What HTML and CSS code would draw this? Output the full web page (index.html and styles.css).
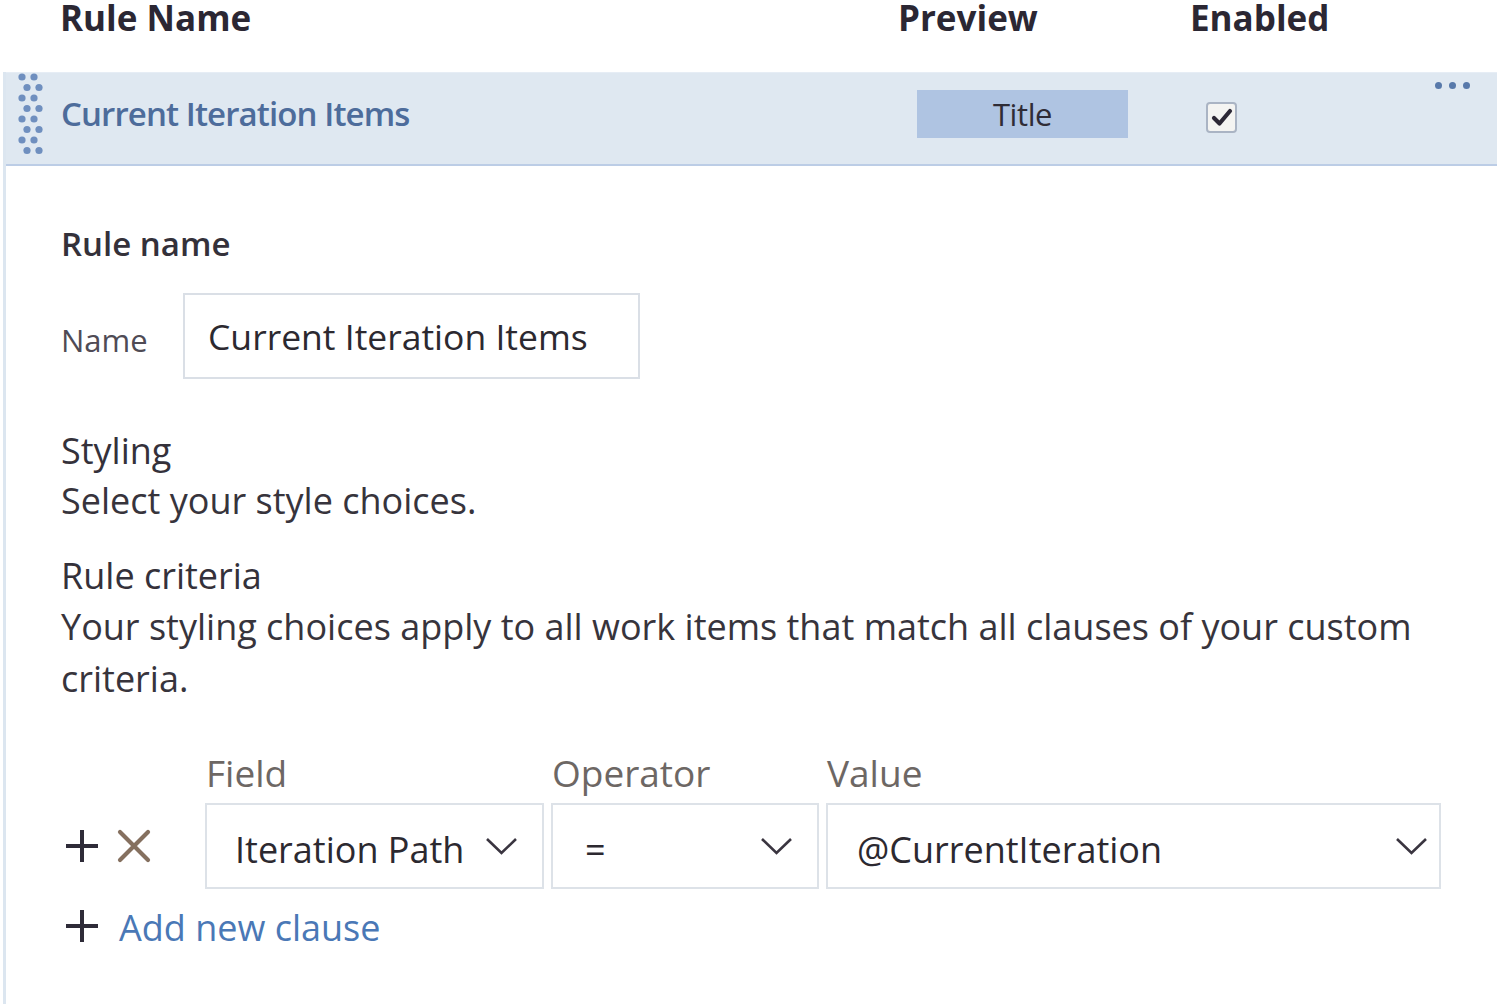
FILE: index.html
```html
<!DOCTYPE html>
<html>
<head>
<meta charset="utf-8">
<link rel="stylesheet" href="styles.css">
</head>
<body>
<div class="header">
  <div class="hcell">Rule Name</div>
  <div class="hcell">Preview</div>
  <div class="hcell">Enabled</div>
</div>
<div class="panel">
  <div class="rule-row">
    <div class="handle">
      <svg width="26" height="84" viewBox="0 0 26 84">
        <g fill="#6f8fbf">
          <circle cx="4" cy="4" r="3.6"/><circle cx="16" cy="4" r="3.6"/>
          <circle cx="9" cy="14.5" r="3.6"/><circle cx="21" cy="14.5" r="3.6"/>
          <circle cx="4" cy="25" r="3.6"/><circle cx="16" cy="25" r="3.6"/>
          <circle cx="9" cy="35.5" r="3.6"/><circle cx="21" cy="35.5" r="3.6"/>
          <circle cx="4" cy="46" r="3.6"/><circle cx="16" cy="46" r="3.6"/>
          <circle cx="9" cy="56.5" r="3.6"/><circle cx="21" cy="56.5" r="3.6"/>
          <circle cx="4" cy="67" r="3.6"/><circle cx="16" cy="67" r="3.6"/>
          <circle cx="9" cy="77.5" r="3.6"/><circle cx="21" cy="77.5" r="3.6"/>
        </g>
      </svg>
    </div>
    <div class="rule-title">Current Iteration Items</div>
    <div class="preview-cell"><div class="chip">Title</div></div>
    <div class="enabled-cell">
      <div class="checkbox">
        <svg width="22" height="20" viewBox="0 0 22 20"><path d="M3 11 L8.5 16.5 L19 4" fill="none" stroke="#2c2836" stroke-width="4.2" stroke-linecap="round" stroke-linejoin="round"/></svg>
      </div>
    </div>
    <div class="more">
      <span class="dot"></span><span class="dot"></span><span class="dot"></span>
    </div>
  </div>

  <div class="details">
    <div class="section-title">Rule name</div>
    <div class="name-row">
      <div class="name-label">Name</div>
      <div class="text-input">Current Iteration Items</div>
    </div>

    <div class="sub-title">Styling</div>
    <div class="desc">Select your style choices.</div>

    <div class="sub-title criteria-title">Rule criteria</div>
    <div class="desc criteria-desc">Your styling choices apply to all work items that match all clauses of your custom criteria.</div>

    <div class="clause-grid">
      <div></div>
      <div class="col-label">Field</div>
      <div class="col-label">Operator</div>
      <div class="col-label">Value</div>

      <div class="clause-actions">
        <svg class="plus" width="36" height="36" viewBox="0 0 36 36"><path d="M18 2 V34 M2 18 H34" stroke="#2e2b38" stroke-width="4" fill="none"/></svg>
        <svg class="cross" width="34" height="34" viewBox="0 0 34 34"><path d="M3 3 L31 31 M31 3 L3 31" stroke="#85705f" stroke-width="4.2" stroke-linecap="round" fill="none"/></svg>
      </div>
      <div class="dropdown field-dd">
        <span class="dd-text">Iteration Path</span>
        <svg class="chev" width="33" height="20" viewBox="0 0 33 20"><path d="M2 3 L16.5 17 L31 3" fill="none" stroke="#3a3540" stroke-width="2.6"/></svg>
      </div>
      <div class="dropdown op-dd">
        <span class="dd-text">=</span>
        <svg class="chev" width="33" height="20" viewBox="0 0 33 20"><path d="M2 3 L16.5 17 L31 3" fill="none" stroke="#3a3540" stroke-width="2.6"/></svg>
      </div>
      <div class="dropdown value-dd">
        <span class="dd-text">@CurrentIteration</span>
        <svg class="chev" width="33" height="20" viewBox="0 0 33 20"><path d="M2 3 L16.5 17 L31 3" fill="none" stroke="#3a3540" stroke-width="2.6"/></svg>
      </div>
    </div>

    <div class="add-clause">
      <svg width="36" height="36" viewBox="0 0 36 36"><path d="M18 2 V34 M2 18 H34" stroke="#2e2b38" stroke-width="4" fill="none"/></svg>
      <span class="add-text">Add new clause</span>
    </div>
  </div>
</div>
</body>
</html>
```
FILE: styles.css
```css
html, body {
  margin: 0;
  padding: 0;
  background: #ffffff;
}
body {
  font-family: "Open Sans", "Noto Sans", "DejaVu Sans", sans-serif;
  color: #2f2d33;
  width: 1500px;
  height: 1004px;
  overflow: hidden;
}

/* Header */
.header {
  display: grid;
  grid-template-columns: 838px 292px 1fr;
  padding-left: 60px;
  padding-top: 3px;
  height: 69px;
}
.hcell {
  font-weight: 700;
  font-size: 35px;
  line-height: 30px;
  color: #2b2733;
}

/* Panel with left rule */
.panel {
  margin-left: 3px;
  border-left: 3px solid #dce6f0;
  margin-right: 3px;
}

.rule-row {
  display: grid;
  grid-template-columns: 55px 856px 289px 1fr auto;
  grid-template-rows: 79px;
  align-items: center;
  height: 79px;
  padding-bottom: 12px;
  background: #dfe8f1;
  border-top: 1px solid #e6edf5;
  border-bottom: 2px solid #bccde6;
  box-sizing: content-box;
}
.handle {
  align-self: start;
  padding-left: 12px;
  height: 79px;
  overflow: visible;
}
.handle svg {
  display: block;
  overflow: visible;
}
.rule-title {
  font-size: 33px;
  font-weight: 600;
  color: #4d6c9b;
  letter-spacing: -0.9px;
  line-height: 40px;
  padding-top: 2px;
}
.chip {
  width: 211px;
  height: 48px;
  background: #afc4e2;
  display: flex;
  align-items: center;
  justify-content: center;
  font-size: 31px;
  color: #2f2c36;
  letter-spacing: -0.4px;
  margin-top: 2px;
}
.checkbox {
  width: 27px;
  height: 27px;
  border: 2px solid #aab4c4;
  border-radius: 4px;
  background: #f4f4f2;
  display: flex;
  align-items: center;
  justify-content: center;
  margin-top: 9px;
}
.more {
  align-self: start;
  display: flex;
  gap: 7px;
  padding-top: 9px;
  padding-right: 27px;
}
.dot {
  width: 7px;
  height: 7px;
  border-radius: 50%;
  background: #5879aa;
}

/* Details */
.details {
  padding-left: 55px;
  height: 836px;
}
.section-title {
  margin-top: 52px;
  font-size: 33px;
  font-weight: 600;
  line-height: 52px;
  color: #34313a;
}
.name-row {
  display: flex;
  align-items: flex-start;
  margin-top: 23px;
  height: 86px;
}
.name-label {
  width: 122px;
  font-size: 31px;
  line-height: 78px;
  padding-top: 8px;
  color: #4f4b55;
}
.text-input {
  width: 430px;
  height: 78px;
  border: 2px solid #dadfe6;
  box-sizing: content-box;
  padding-left: 23px;
  padding-top: 4px;
  font-size: 35.5px;
  line-height: 74px;
  color: #2c2930;
}

.sub-title {
  margin-top: 47px;
  font-size: 36px;
  line-height: 50px;
  color: #34313a;
}
.desc {
  font-size: 36px;
  line-height: 50px;
  color: #37343c;
}
.criteria-title {
  margin-top: 24px;
  line-height: 51px;
}
.criteria-desc {
  line-height: 52px;
  width: 1400px;
}

.clause-grid {
  display: grid;
  grid-template-columns: 137px 339px 268px 615px;
  column-gap: 7px;
  margin-top: 46px;
}
.col-label {
  font-size: 37px;
  line-height: 44px;
  color: #6d6764;
  padding-left: 1px;
  margin-bottom: 8px;
}
.clause-actions {
  display: flex;
  align-items: center;
  gap: 17px;
  padding-left: 3px;
  height: 86px;
}
.dropdown {
  height: 82px;
  border: 2px solid #dde2e8;
  display: flex;
  align-items: center;
  justify-content: space-between;
  box-sizing: content-box;
}
.dd-text {
  font-size: 36px;
  color: #2c2930;
  padding-top: 6px;
}
.field-dd { padding-left: 28px; padding-right: 24px; }
.op-dd { padding-left: 32px; padding-right: 24px; }
.value-dd { padding-left: 29px; padding-right: 11px; }

.add-clause {
  margin-top: 15px;
  display: flex;
  align-items: center;
  gap: 19px;
  padding-left: 3px;
  height: 44px;
}
.add-text {
  font-size: 36px;
  color: #4a78b6;
  padding-top: 2px;
}
```
